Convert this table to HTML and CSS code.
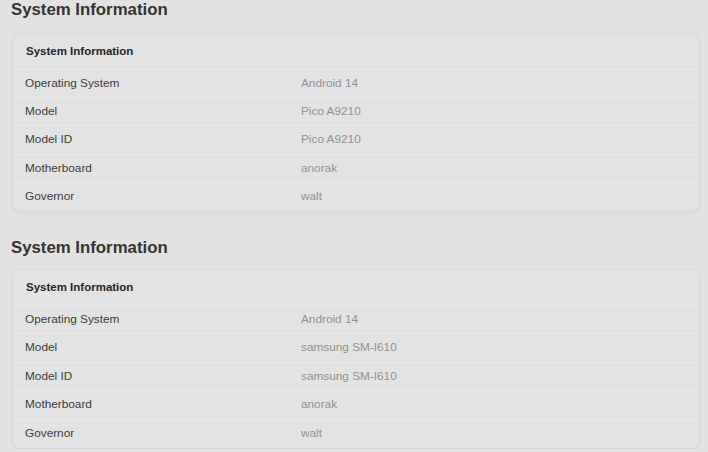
FILE: index.html
```html
<!DOCTYPE html>
<html lang="en">
<head>
    <meta charset="UTF-8">
    <title>System Information</title>
    <link rel="stylesheet" href="styles.css">
</head>
<body>
    <section class="section">
        <h2>System Information</h2>
        <div class="card">
            <div class="card-header">System Information</div>
            <div class="row"><span class="label">Operating System</span><span class="value">Android 14</span></div>
            <div class="row"><span class="label">Model</span><span class="value">Pico A9210</span></div>
            <div class="row"><span class="label">Model ID</span><span class="value">Pico A9210</span></div>
            <div class="row"><span class="label">Motherboard</span><span class="value">anorak</span></div>
            <div class="row"><span class="label">Governor</span><span class="value">walt</span></div>
        </div>
    </section>

    <section class="section second">
        <h2>System Information</h2>
        <div class="card">
            <div class="card-header">System Information</div>
            <div class="row"><span class="label">Operating System</span><span class="value">Android 14</span></div>
            <div class="row"><span class="label">Model</span><span class="value">samsung SM-I610</span></div>
            <div class="row"><span class="label">Model ID</span><span class="value">samsung SM-I610</span></div>
            <div class="row"><span class="label">Motherboard</span><span class="value">anorak</span></div>
            <div class="row"><span class="label">Governor</span><span class="value">walt</span></div>
        </div>
    </section>
</body>
</html>
```

FILE: styles.css
```css
body {
    margin: 0;
    padding: 0 8px 0 11px;
    background-color: #e2e2e2;
    font-family: 'Liberation Sans', Arial, sans-serif;
    color: #333;
}

h2 {
    margin: 0;
    font-size: 16.8px;
    line-height: 20px;
    font-weight: bold;
    color: #333;
}

.second {
    margin-top: 26px;
}

.card {
    margin: 13px 0 0 1px;
    background-color: #e3e3e3;
    border: 1px solid #dadada;
    border-radius: 8px;
    box-shadow: 0 1px 3px rgba(0, 0, 0, 0.06);
    padding: 0 3px 1px;
}

.second .card {
    margin-top: 11px;
}

.card-header {
    height: 35px;
    line-height: 35px;
    padding-left: 10px;
    font-size: 11.5px;
    font-weight: bold;
    color: #262626;
}

.row {
    display: grid;
    grid-template-columns: 276px 1fr;
    height: 27.2px;
    line-height: 27.2px;
    padding-left: 9px;
    border-top: 1px solid #ececec;
    font-size: 11.8px;
}

.second .row {
    height: 27.4px;
    line-height: 27.4px;
}

.label {
    color: #3c3c3c;
}

.value {
    color: #929292;
}
```
